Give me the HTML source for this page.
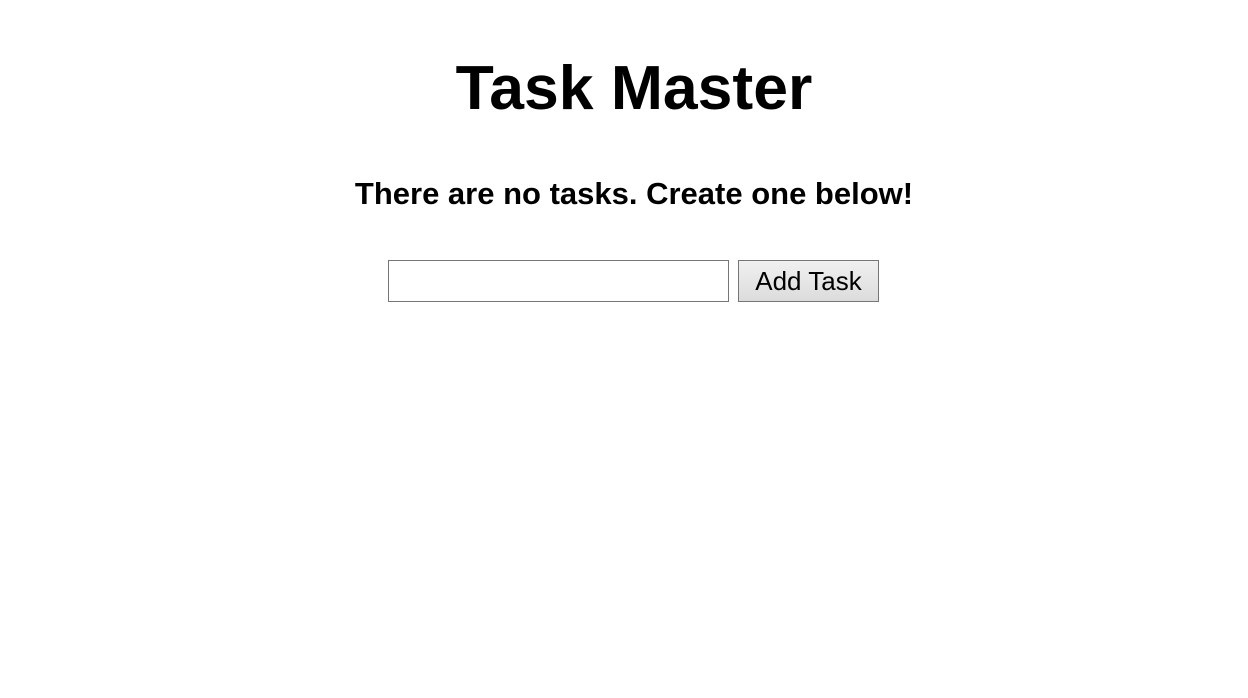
<!DOCTYPE html>
<html><head><meta charset="utf-8"><style>
html,body{margin:0;padding:0;background:#fff;width:1248px;height:698px;overflow:hidden}
h1{position:absolute;left:20px;width:1228px;top:50px;margin:0;text-align:center;font:bold 62.5px/76px "Liberation Sans",sans-serif;color:#000}
h2{position:absolute;left:20px;width:1228px;top:175px;margin:0;text-align:center;font:bold 31px/38px "Liberation Sans",sans-serif;color:#000}
.inp{position:absolute;left:388px;top:260px;width:339px;height:40px;border:1px solid #767676;background:#fff}
.btn{position:absolute;left:738px;top:260px;width:139px;height:40px;border:1px solid #767676;background:linear-gradient(#f0f0f0,#dcdcdc);font:26px/40px "Liberation Sans",sans-serif;color:#000;text-align:center;box-sizing:content-box}
</style></head><body>
<h1>Task Master</h1>
<h2>There are no tasks. Create one below!</h2>
<div class="inp"></div>
<div class="btn">Add Task</div>
</body></html>
